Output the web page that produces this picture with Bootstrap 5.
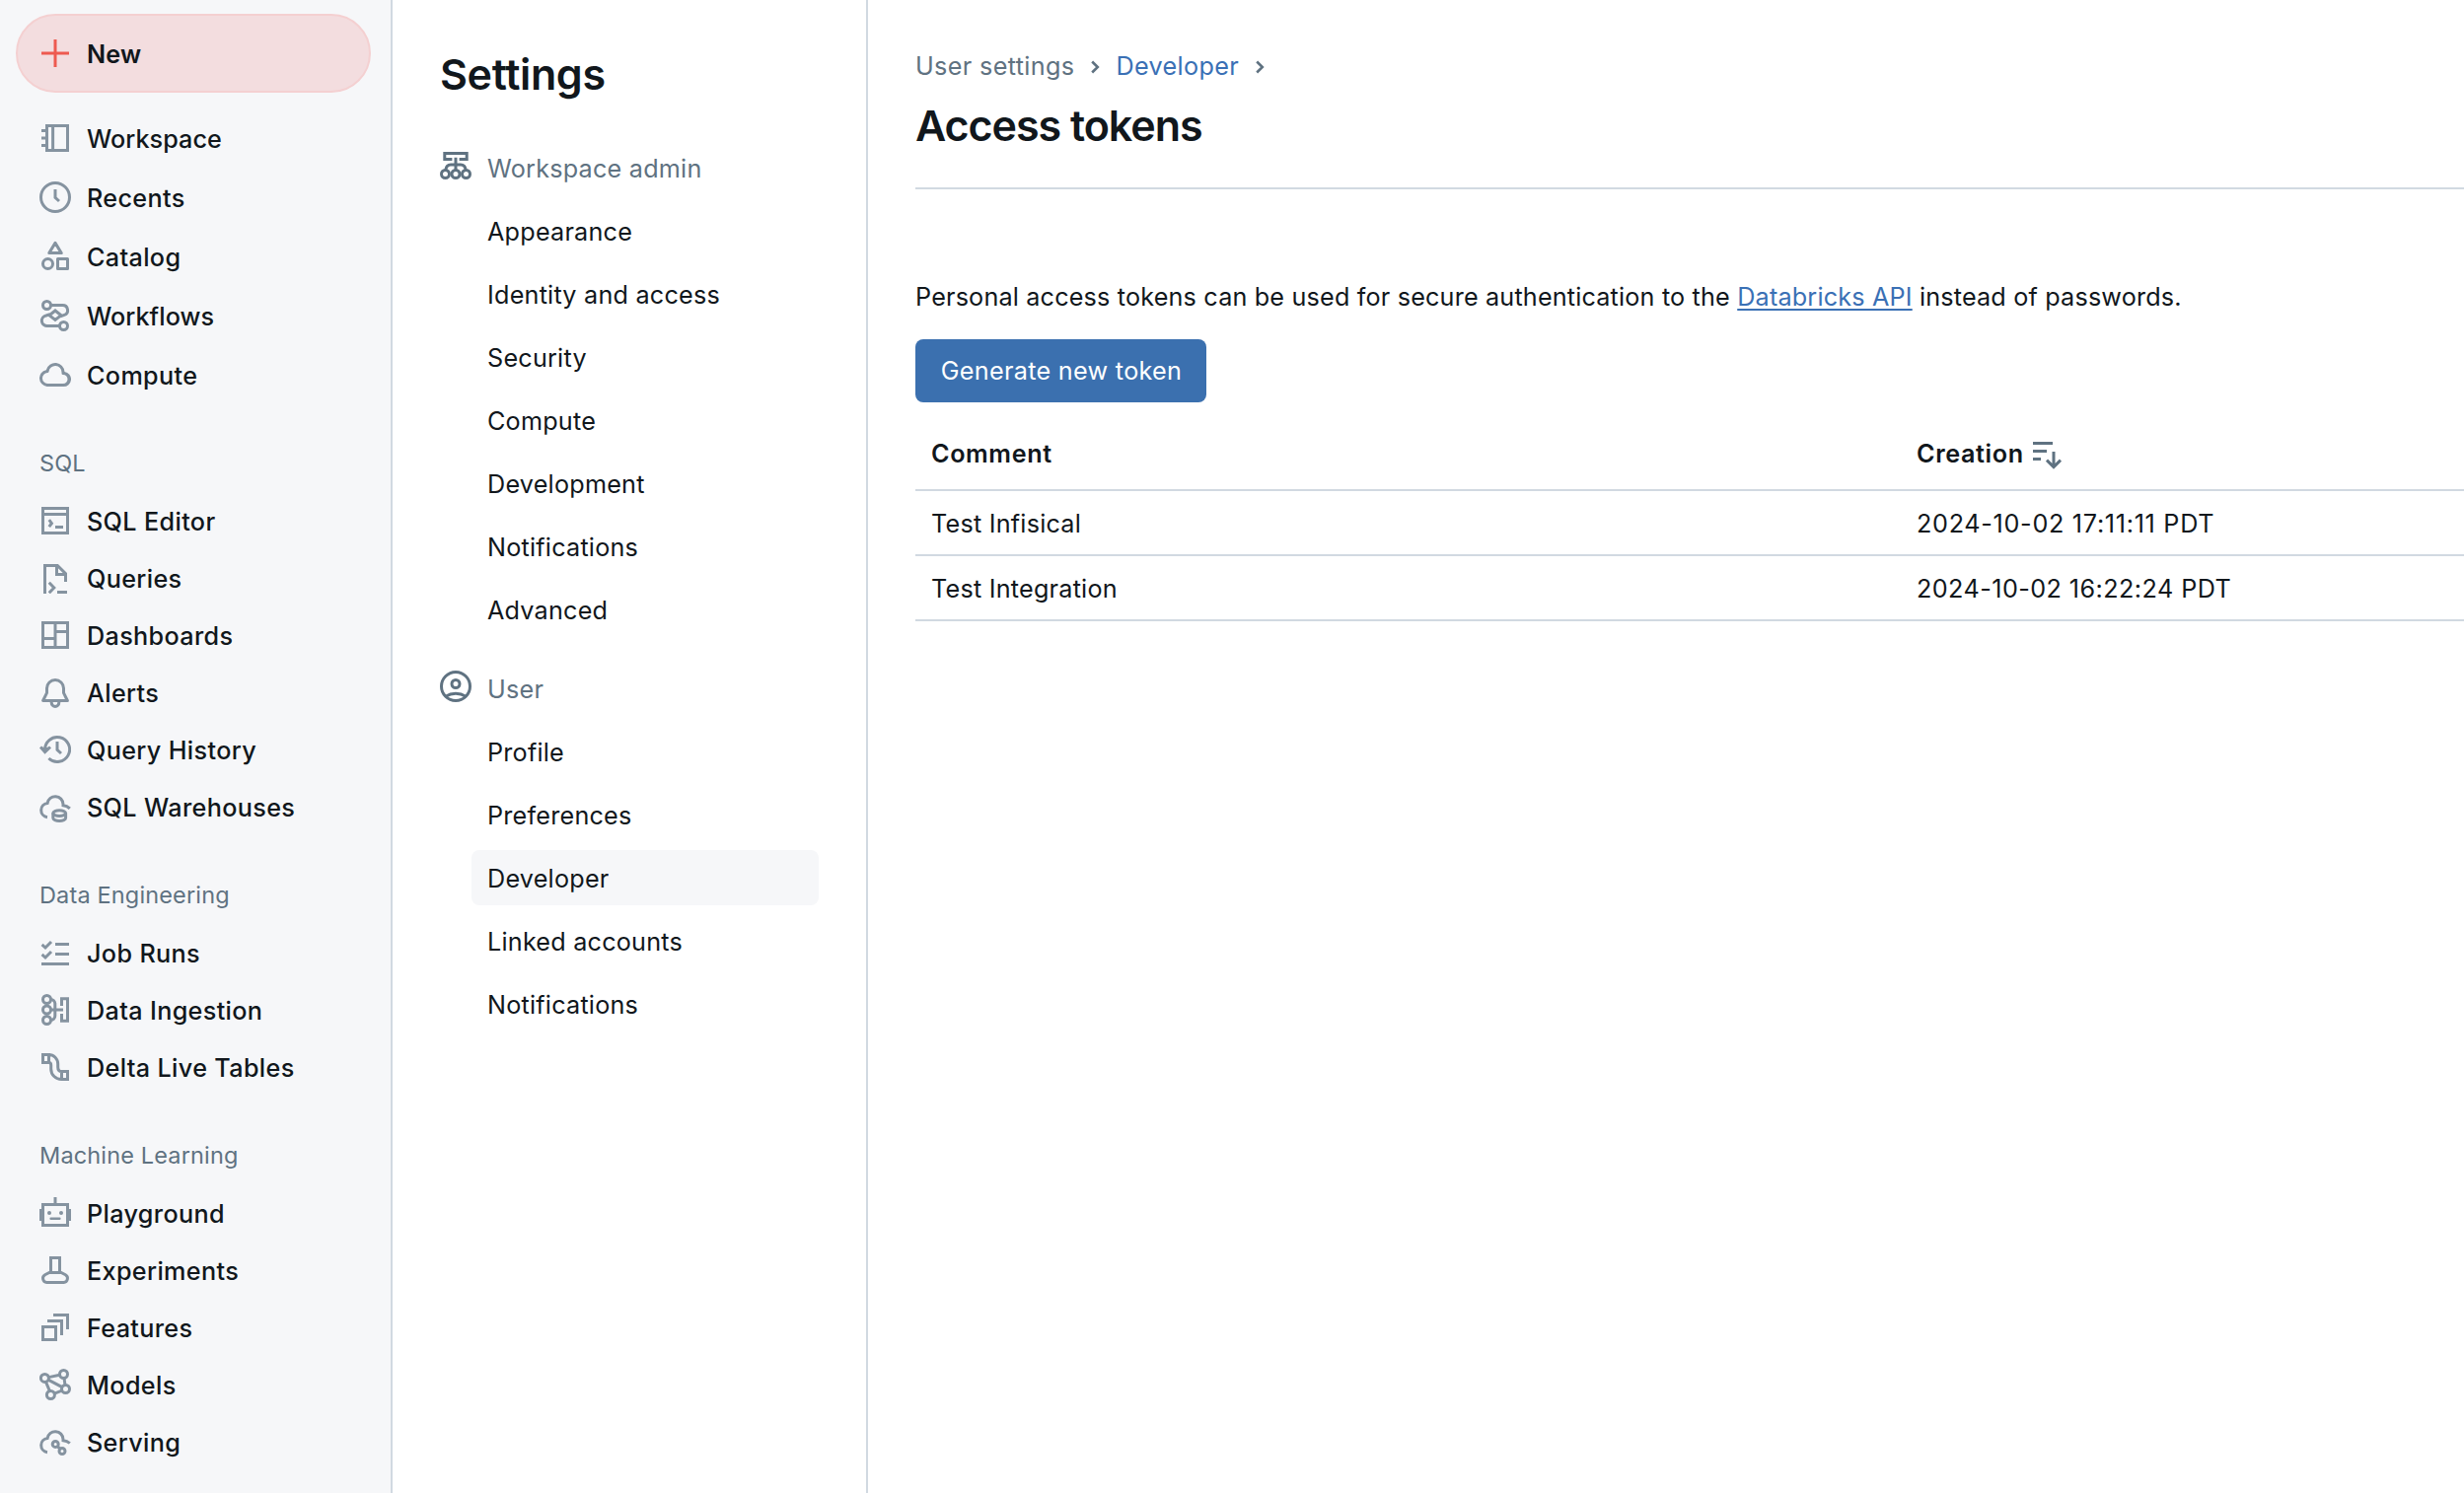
<!DOCTYPE html>
<html lang="en">
<head>
<meta charset="utf-8">
<meta name="viewport" content="width=device-width, initial-scale=1">
<title>Settings - Access tokens</title>
<link href="https://cdn.jsdelivr.net/npm/bootstrap@5.3.0/dist/css/bootstrap.min.css" rel="stylesheet">
<style>
  body { font-family: Inter, "Liberation Sans", sans-serif; font-size: 25.2px; line-height: 40px; letter-spacing: .22px; color: #11171c; }
  a { text-decoration: none; color: inherit; }
  svg { flex: none; width: 32px; height: 32px; fill: none; stroke: currentColor; stroke-width: 1.5; }
  .solid { fill: currentColor; stroke: none; }
  .app-side { width: 398px; background: #f6f7f9; border-right: 2px solid #d1d9e1; font-weight: 500; letter-spacing: .35px; }
  .app-side svg { color: #8593a0; }
  .app-side .nav-link { display: flex; align-items: center; gap: 16px; height: 58px; padding: 0 0 0 40px; color: inherit; }
  .app-side .nav-link span, .set-link span, .set-head span, .new-btn span { padding-top: 2px; }
  .app-side .tall .nav-link { height: 60px; }
  .app-side .tall { margin-bottom: -1px; }
  .app-side .tight { letter-spacing: .05px; }
  .app-side .new-btn { height: 80px; margin: 14px 20px 16px 16px; padding-left: 22px; gap: 16px; border: 2px solid #f4d0d1; border-radius: 40px; background: #f3dddf; font-weight: 600; letter-spacing: .2px; }
  .app-side .new-btn svg { color: #ee5a50; }
  .side-label { height: 58px; line-height: 58px; margin-top: 32px; padding-left: 40px; font-size: 23.5px; font-weight: 400; letter-spacing: .15px; color: #5f7281; }
  .set-side { width: 482px; border-right: 2px solid #d1d9e1; padding: 0 48px; }
  .page-title { font-size: 43px; font-weight: 600; line-height: 56px; margin: 0; }
  .set-side .page-title { letter-spacing: -.35px; margin-top: 47px; margin-bottom: 39px; }
  .set-head { height: 56px; gap: 16px; color: #5f7281; margin-bottom: 8px; }
  .set-head svg { margin-top: -4px; }
  .set-head + .set-list { margin-left: 32px; gap: 8px; }
  .set-link { height: 56px; padding-left: 16px; border-radius: 8px; }
  .set-link.active { background: #f6f7f9; }
  .page-body { padding: 47px 0 0 48px; }
  .crumbs { height: 40px; color: #5f7281; letter-spacing: .35px; }
  .crumbs svg { width: 11px; height: 14px; margin: 2px 15px 0 16px; stroke-width: 2.6; }
  .linkish { color: #3a70b5; }
  .page-body .page-title { letter-spacing: -1.04px; margin-top: 12px; padding-bottom: 35px; border-bottom: 2px solid #d1d9e1; }
  .intro { margin: 89px 0 23px; letter-spacing: .175px; }
  .intro a { text-decoration: underline; text-decoration-thickness: 2px; text-underline-offset: 3px; }
  .btn-token { width: 295px; height: 64px; padding: 2px 0 0 1px; border: 0; border-radius: 8px; background: #3b70af; color: #fff; font-size: 25.2px; letter-spacing: .3px; }
  .btn-token:hover { background: #31619b; color: #fff; }
  .token-table { table-layout: fixed; margin: 23px 0 0; color: inherit; --bs-table-color: #11171c; }
  .token-table > :not(caption) > * > * { height: 66px; padding: 2px 16px 0; border-bottom: 2px solid #d1d9e1; vertical-align: middle; }
  .token-table > thead > tr > th { font-weight: 600; letter-spacing: .6px; padding: 0 16px 7px; }
  .token-table col:first-child { width: 999px; }
  .token-table svg { color: #5f7281; margin-left: -1px; }
  .stamp-a { letter-spacing: .7px; }
  .stamp-b { letter-spacing: .43px; }
</style>
</head>
<body>
<div class="d-flex vh-100 overflow-hidden">

  <aside class="app-side flex-shrink-0">
    <a href="#" class="new-btn d-flex align-items-center"><svg viewBox="0 0 16 16"><path d="M8 1v14M1 8h14"/></svg><span>New</span></a>
    <nav class="nav flex-column tall">
      <a class="nav-link" href="#"><svg viewBox="0 0 16 16"><path d="M3.75 1.75h10.5v12.5H3.75zM6.8 1.75v12.5M1 4.25h2.75M1 8h2.75M1 11.75h2.75"/></svg><span class="tight">Workspace</span></a>
      <a class="nav-link" href="#"><svg viewBox="0 0 16 16"><circle cx="8" cy="8" r="7.25"/><path d="M8 4v4.2l2 1.8"/></svg><span>Recents</span></a>
      <a class="nav-link" href="#"><svg viewBox="0 0 16 16" stroke-linejoin="round"><path d="M8 1.2 11.1 6.3H4.9zM9.25 9.25h5v5h-5z"/><circle cx="4.25" cy="11.75" r="2.5"/></svg><span>Catalog</span></a>
      <a class="nav-link" href="#"><svg viewBox="0 0 16 16"><circle cx="3.75" cy="2.75" r="2"/><circle cx="12.25" cy="13.25" r="2"/><path d="M5.7 2.75h6a2.55 2.55 0 0 1 .9 4.95l-2 .7M5.4 7.3l-2 .7a2.6 2.6 0 0 0 .9 5.25h5.9M8 5.5l3 2.4-3 2.3-3-2.3z"/></svg><span class="tight">Workflows</span></a>
      <a class="nav-link" href="#"><svg viewBox="0 0 16 16"><path class="solid" d="M3.394 5.586a4.752 4.752 0 0 1 9.351.946 3.75 3.75 0 0 1-.668 7.464L12 14H4a.8.8 0 0 1-.179-.021 4.25 4.25 0 0 1-.427-8.393m.72 6.914h7.762q.186 0 .124 0a2.25 2.25 0 0 0 0-4.5H12a.75.75 0 0 1-.75-.75v-.5a3.25 3.25 0 0 0-6.475-.402.75.75 0 0 1-.698.657 2.75 2.75 0 0 0-.024 5.488z"/></svg><span>Compute</span></a>
    </nav>

    <div class="side-label">SQL</div>
    <nav class="nav flex-column">
      <a class="nav-link" href="#"><svg viewBox="0 0 16 16"><path d="M1.75 1.75h12.5v12.5H1.75zM1.75 4.7h12.5M4.9 7.6l1.3 1.75-1.3 1.75M8 11.25h4"/></svg><span>SQL Editor</span></a>
      <a class="nav-link" href="#"><svg viewBox="0 0 16 16"><path d="M2.75 16V1.75h6.4l4.1 4.1V10M8.75 1.75v4.5h4.5M4.9 10.4 7.4 13l-2.5 2.6M9 15.25h5"/></svg><span>Queries</span></a>
      <a class="nav-link" href="#"><svg viewBox="0 0 16 16"><path d="M1.75 1.75h12.5v12.5H1.75zM8 1.75v12.5M8 6.2h6.25M1.75 9.75H8"/></svg><span>Dashboards</span></a>
      <a class="nav-link" href="#"><svg viewBox="0 0 16 16" stroke-linejoin="round"><path d="M8 1.75A4.25 4.25 0 0 0 3.75 6v2.3L1.8 12.25h12.4L12.25 8.3V6A4.25 4.25 0 0 0 8 1.75zM6.1 12.6v.6a1.9 2 0 0 0 3.8 0v-.6"/></svg><span>Alerts</span></a>
      <a class="nav-link" href="#"><svg viewBox="0 0 16 16"><path d="M2.8 8.4A6.25 6.25 0 1 1 4.7 12.5M9 4v4.2l2 1.8"/><path class="solid" d="M0 7.2 1 6.3l1.2.8 2-.2.8-.6 1 .9L2.75 10.4z"/></svg><span>Query History</span></a>
      <a class="nav-link" href="#"><svg viewBox="0 0 16 16"><path d="M4 13.35A3.6 3.6 0 0 1 4.05 6.2 4 4 0 0 1 12 6.75v.6c1.4.1 2.4.6 3.4 1.6"/><ellipse cx="10.1" cy="11.3" rx="3.2" ry="1.45"/><path d="M6.9 11.3v2.5c0 .8 1.4 1.45 3.2 1.45s3.2-.65 3.2-1.45v-2.5"/></svg><span>SQL Warehouses</span></a>
    </nav>

    <div class="side-label">Data Engineering</div>
    <nav class="nav flex-column">
      <a class="nav-link" href="#"><svg viewBox="0 0 16 16"><path d="M8 3.75h7M8 8.75h7M1 13.75h14M1.3 3.9 3 5.5 6 2.5M1.3 8.9 3 10.5l3-3"/></svg><span>Job Runs</span></a>
      <a class="nav-link" href="#"><svg viewBox="0 0 16 16"><circle cx="3.75" cy="2.75" r="2"/><circle cx="3.75" cy="8" r="2"/><circle cx="3.75" cy="13.25" r="2"/><path d="M5.7 2.75c1.3 0 2.2.9 2.2 2.2v6.1c0 1.3-.9 2.2-2.2 2.2M5.75 8H12M11.25 6V2.4h3v11.2h-3V10"/></svg><span>Data Ingestion</span></a>
      <a class="nav-link" href="#"><svg viewBox="0 0 16 16"><path d="M1.75 1.75h3v4h-3zM11.25 10.25h3v4h-3zM4.75 1.75a4.6 4.6 0 0 1 4.6 4.6v1.6c0 1.5.8 2.3 1.9 2.3M4.75 5.75c.7 0 1.1.5 1.1 1.3v1.9a5.3 5.3 0 0 0 5.4 5.3"/></svg><span>Delta Live Tables</span></a>
    </nav>

    <div class="side-label">Machine Learning</div>
    <nav class="nav flex-column">
      <a class="nav-link" href="#"><svg viewBox="0 0 16 16"><path d="M1.75 3.75h12.5v10.5H1.75zM8 0v3.5M.75 6v6M15.25 6v6"/><path stroke-width="1.2" stroke-linecap="round" d="M5.8 10.9h4.4"/><g class="solid"><circle cx="5" cy="8" r="1"/><circle cx="11" cy="8" r="1"/></g></svg><span>Playground</span></a>
      <a class="nav-link" href="#"><svg viewBox="0 0 16 16"><path d="M5.75 9.2V1.75h4.5V9.2M5 9.25h6l2.2 1.1a2.1 2.1 0 0 1-.9 3.9H3.7a2.1 2.1 0 0 1-.9-3.9z"/></svg><span>Experiments</span></a>
      <a class="nav-link" href="#"><svg viewBox="0 0 16 16"><path d="M1.75 7.75h6.5v6.5h-6.5zM4 4.75h7.25V12M7 1.75h7.25V9"/></svg><span>Features</span></a>
      <a class="nav-link" href="#"><svg viewBox="0 0 16 16"><circle cx="2.7" cy="4.7" r="2"/><circle cx="12.25" cy="2.75" r="2"/><circle cx="13.25" cy="10.25" r="2"/><circle cx="5.7" cy="13.25" r="2"/><path d="M4.7 4.3l5.6-1.2M12.5 4.7l.5 3.6M4.4 5.6l7.1 3.7M3.2 6.6l2 4.7M7.6 12.6l3.8-1.5"/></svg><span>Models</span></a>
      <a class="nav-link" href="#"><svg viewBox="0 0 16 16"><path d="M4 13.35A3.6 3.6 0 0 1 4.05 6.2 4 4 0 0 1 12 6.75v.6c1.4.1 2.4.5 3.4 1.4"/><circle cx="8.1" cy="9.2" r="1.5"/><circle cx="11.5" cy="12.75" r="1.5"/><path d="M9.1 10.3l1.4 1.4"/></svg><span>Serving</span></a>
    </nav>
  </aside>

  <section class="set-side flex-shrink-0">
    <h2 class="page-title">Settings</h2>
    <div class="set-head d-flex align-items-center"><svg viewBox="0 0 16 16"><path d="M6.2 4.75H2.4v-3h11.2v3H9.8M8 3.9v6.4M2.9 10.2c.2-1.6 1.1-2.7 2.6-2.7h5c1.5 0 2.4 1.1 2.6 2.7"/><circle cx="2.75" cy="12.25" r="2"/><circle cx="8" cy="12.25" r="2"/><circle cx="13.25" cy="12.25" r="2"/></svg><span>Workspace admin</span></div>
    <div class="set-list d-flex flex-column">
      <a href="#" class="set-link d-flex align-items-center"><span>Appearance</span></a>
      <a href="#" class="set-link d-flex align-items-center"><span>Identity and access</span></a>
      <a href="#" class="set-link d-flex align-items-center"><span>Security</span></a>
      <a href="#" class="set-link d-flex align-items-center"><span>Compute</span></a>
      <a href="#" class="set-link d-flex align-items-center"><span>Development</span></a>
      <a href="#" class="set-link d-flex align-items-center"><span>Notifications</span></a>
      <a href="#" class="set-link d-flex align-items-center"><span>Advanced</span></a>
    </div>
    <div class="set-head d-flex align-items-center mt-4"><svg viewBox="0 0 16 16"><circle cx="8" cy="8" r="7.25"/><circle cx="8" cy="6.75" r="2"/><path d="M2.9 13.1c3-1.9 7.2-1.9 10.2 0"/></svg><span>User</span></div>
    <div class="set-list d-flex flex-column">
      <a href="#" class="set-link d-flex align-items-center"><span>Profile</span></a>
      <a href="#" class="set-link d-flex align-items-center"><span>Preferences</span></a>
      <a href="#" class="set-link d-flex align-items-center active"><span>Developer</span></a>
      <a href="#" class="set-link d-flex align-items-center"><span>Linked accounts</span></a>
      <a href="#" class="set-link d-flex align-items-center"><span>Notifications</span></a>
    </div>
  </section>

  <main class="page-body flex-grow-1">
    <div class="crumbs d-flex align-items-center">
      <span>User settings</span><svg viewBox="0 0 11 14"><path d="M2.2 1.5 7.8 7l-5.6 5.5"/></svg><a href="#" class="linkish">Developer</a><svg viewBox="0 0 11 14"><path d="M2.2 1.5 7.8 7l-5.6 5.5"/></svg>
    </div>
    <h1 class="page-title">Access tokens</h1>
    <p class="intro">Personal access tokens can be used for secure authentication to the <a href="#" class="linkish">Databricks API</a> instead of passwords.</p>
    <button type="button" class="btn btn-token d-block">Generate new token</button>
    <table class="table token-table">
      <colgroup><col><col></colgroup>
      <thead>
        <tr><th>Comment</th><th><div class="d-flex align-items-center gap-2">Creation<svg viewBox="0 0 16 16"><path d="M1 2.75h10M1 6.75h7M1 10.75h4M11.5 7v7.7M8 11.3l3.5 3.5 3.5-3.5"/></svg></div></th></tr>
      </thead>
      <tbody>
        <tr><td>Test Infisical</td><td class="stamp-a">2024-10-02 17:11:11 PDT</td></tr>
        <tr><td>Test Integration</td><td class="stamp-b">2024-10-02 16:22:24 PDT</td></tr>
      </tbody>
    </table>
  </main>
</div>
<script src="https://cdn.jsdelivr.net/npm/bootstrap@5.3.0/dist/js/bootstrap.bundle.min.js"></script>
</body>
</html>
